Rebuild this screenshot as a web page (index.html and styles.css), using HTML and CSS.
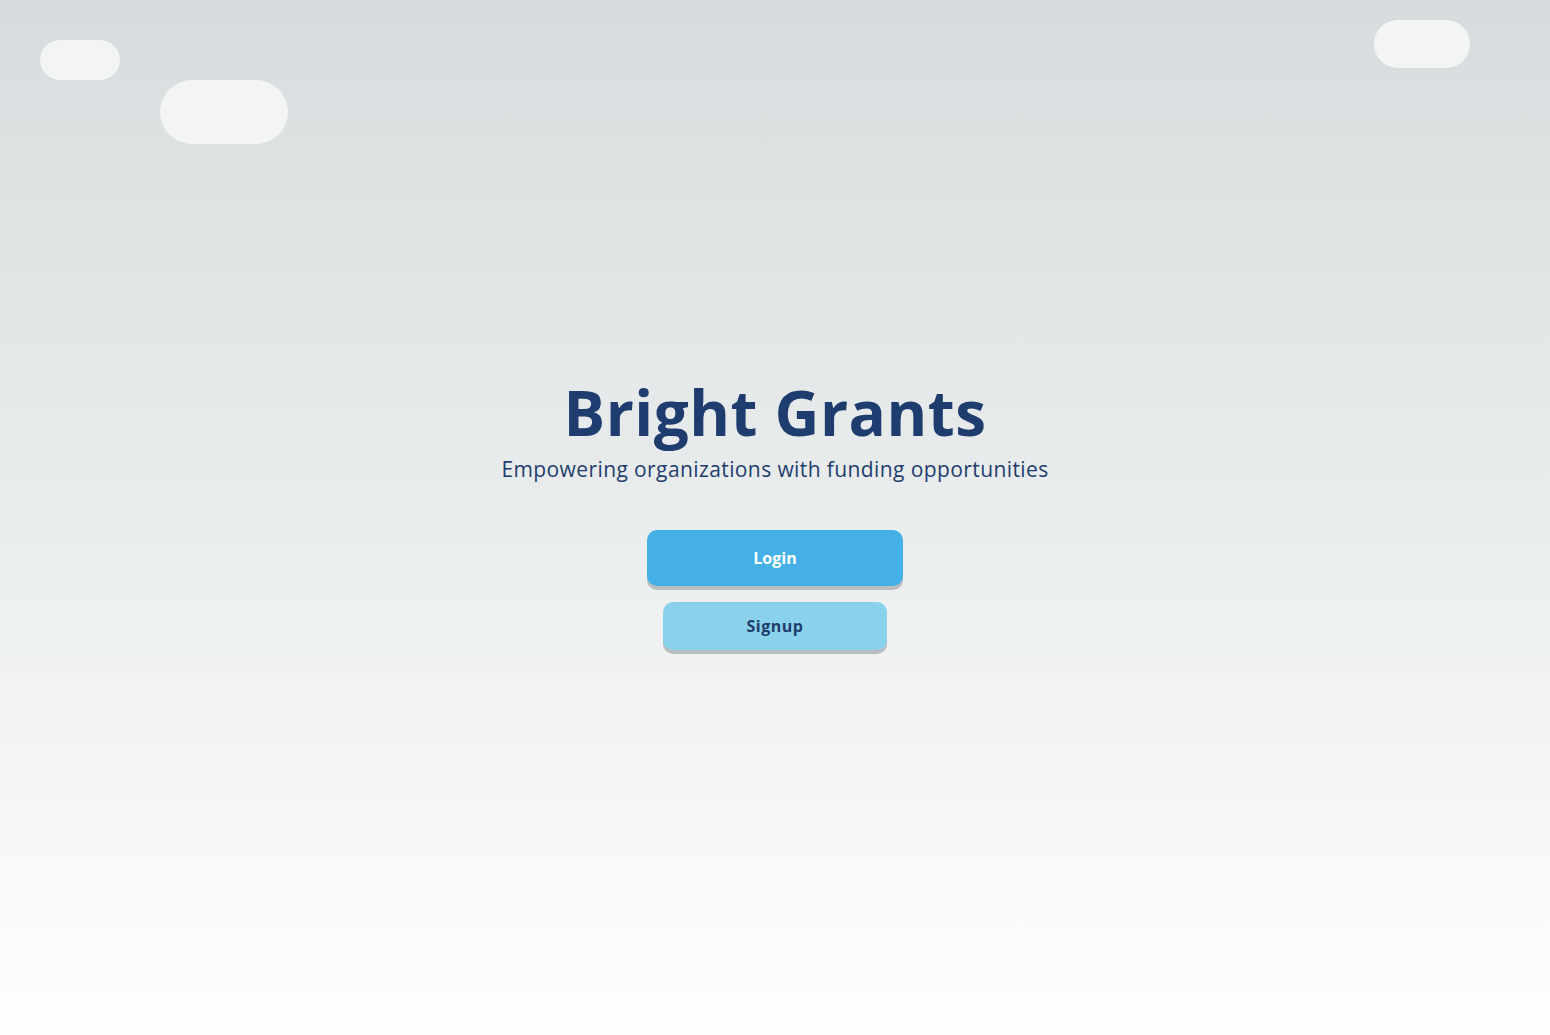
FILE: index.html
```html
<!DOCTYPE html>
<html lang="en">
<head>
<meta charset="utf-8">
<title>Bright Grants</title>
<link rel="stylesheet" href="styles.css">
</head>
<body>
<div class="sky">
  <div class="cloud cloud-a"></div>
  <div class="cloud cloud-b"></div>
  <div class="cloud cloud-c"></div>
  <main class="hero">
    <h1 class="title">Bright Grants</h1>
    <p class="tagline">Empowering organizations with funding opportunities</p>
    <div class="actions">
      <button class="btn btn-login">Login</button>
      <button class="btn btn-signup">Signup</button>
    </div>
  </main>
</div>
</body>
</html>
```
FILE: styles.css
```css
* { box-sizing: border-box; }
html, body { margin: 0; padding: 0; height: 100%; }
body {
  font-family: "Open Sans", "Liberation Sans", sans-serif;
  color: #1e3d6e;
}
.sky {
  position: relative;
  min-height: 100vh;
  background: linear-gradient(180deg, #d6dcdd 0%, #fefefe 100%);
  display: flex;
  align-items: center;
  justify-content: center;
  overflow: hidden;
}
.cloud {
  position: absolute;
  background: #f3f5f5;
  border-radius: 999px;
}
.cloud-a { left: 40px; top: 40px; width: 80px; height: 40px; }
.cloud-b { left: 160px; top: 80px; width: 128px; height: 64px; }
.cloud-c { left: 1374px; top: 20px; width: 96px; height: 48px; }
.hero {
  display: flex;
  flex-direction: column;
  align-items: center;
  text-align: center;
  padding-bottom: 15px;
}
.title {
  margin: 0;
  font-size: 62px;
  font-weight: 700;
  line-height: 85px;
  letter-spacing: 0.5px;
  color: #1e3d6e;
}
.tagline {
  margin: 0;
  font-size: 21px;
  line-height: 29px;
  letter-spacing: 0.4px;
  color: #1e3d6e;
}
.actions {
  margin-top: 46px;
  display: flex;
  flex-direction: column;
  align-items: center;
  gap: 16px;
}
.btn {
  border: none;
  font-family: inherit;
  font-weight: 700;
  font-size: 16px;
  border-radius: 10px;
  cursor: pointer;
}
.btn-login {
  width: 256px;
  height: 56px;
  background: #45b0e5;
  color: #ffffff;
  box-shadow: 0 4px 0 #b9bdbf;
}
.btn-signup {
  width: 224px;
  height: 48px;
  background: #8ad2ec;
  color: #1e3d6e;
  letter-spacing: 0.5px;
  box-shadow: 0 4px 0 #b9bdbf;
}
```
